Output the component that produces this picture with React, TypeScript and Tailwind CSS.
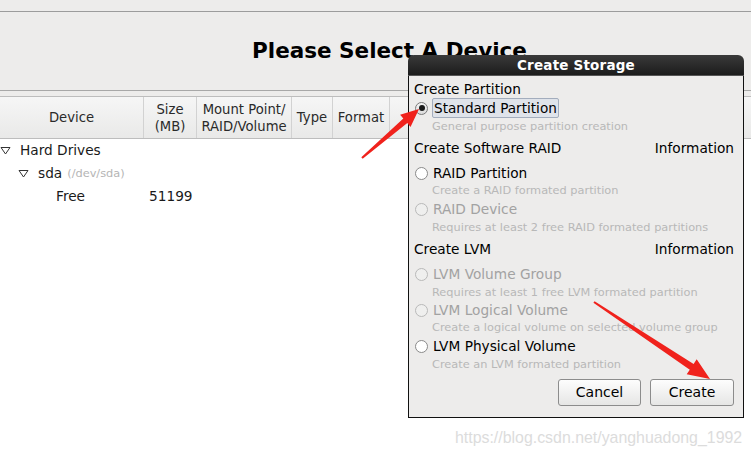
import React from "react";

const font = { fontFamily: '"DejaVu Sans", Verdana, sans-serif' };

function Tri({ className = "" }: { className?: string }) {
  return (
    <svg width="11" height="9" viewBox="0 0 11 9" className={className}>
      <path d="M1 1.5 L10 1.5 L5.5 8 Z" fill="white" stroke="#333" strokeWidth="1" strokeLinejoin="round" />
    </svg>
  );
}

function Radio({ state }: { state: "on" | "off" | "disabled" }) {
  if (state === "on")
    return (
      <span className="w-[13px] h-[13px] rounded-full border border-[#7a7a7a] bg-gradient-to-b from-[#f4f4f4] to-[#dcdcdc] flex items-center justify-center">
        <span className="w-[6px] h-[6px] rounded-full bg-[#1a1a1a]" />
      </span>
    );
  if (state === "off")
    return <span className="w-[13px] h-[13px] rounded-full border border-[#8a8a8a] bg-white" />;
  return <span className="w-[13px] h-[13px] rounded-full border border-[#b9b9b9] bg-[#efefee]" />;
}

function Option({ label, state, mt }: { label: string; state: "on" | "off" | "disabled"; mt: string }) {
  return (
    <div className={`h-[18px] flex items-center ${mt}`}>
      <span className="w-[19px] flex items-center pl-[1px]">
        <Radio state={state} />
      </span>
      <span className={`text-[13.7px] ${state === "disabled" ? "text-[#a2a2a2]" : "text-black"}`}>{label}</span>
    </div>
  );
}

function Desc({ text, mt }: { text: string; mt: string }) {
  return <div className={`h-[18px] flex items-center pl-[18px] text-[11.35px] text-[#b8b8b8] ${mt}`}>{text}</div>;
}

function Section({ title, info, mt }: { title: string; info?: boolean; mt: string }) {
  return (
    <div className={`h-[18px] flex items-center justify-between text-[13.7px] text-black ${mt}`}>
      <span>{title}</span>
      {info && <span>Information</span>}
    </div>
  );
}

export default function App() {
  return (
    <div className="relative w-[751px] h-[454px] bg-white overflow-hidden" style={font}>
      {/* Top area */}
      <div className="bg-[#edeceb]">
        <div className="h-[11px]" />
        <div className="h-px bg-[#9c9c9c]" />
        <div className="h-[78px] flex items-center pl-[252px] pt-[1px]">
          <span className="text-[21.5px] font-bold text-black">Please Select A Device</span>
        </div>
        <div className="h-px bg-[#a8a8a8]" />
        <div className="h-[5px]" />
      </div>
      {/* Header row */}
      <div className="h-[43px] flex border-t border-b border-[#bdbdbd] bg-gradient-to-b from-[#f6f6f6] to-[#e9e9e8] text-[13.2px] text-[#2a2a2a] leading-[17px]">
        <div className="w-[144px] flex items-center justify-center border-r border-[#d2d2d2]">Device</div>
        <div className="w-[53px] flex items-center justify-center text-center border-r border-[#d2d2d2]">
          Size
          <br />
          (MB)
        </div>
        <div className="w-[95px] flex items-center justify-center text-center border-r border-[#d2d2d2]">
          Mount Point/
          <br />
          RAID/Volume
        </div>
        <div className="w-[41px] flex items-center justify-center border-r border-[#d2d2d2]">Type</div>
        <div className="w-[57px] flex items-center justify-center border-r border-[#d2d2d2]">Format</div>
        <div className="flex-1" />
      </div>
      {/* Tree */}
      <div className="text-[13.7px] text-[#1a1a1a]">
        <div className="h-[23px] flex items-center">
          <Tri className="ml-[0px]" />
          <span className="ml-[9px]">Hard Drives</span>
        </div>
        <div className="h-[23px] flex items-center">
          <Tri className="ml-[18px]" />
          <span className="ml-[9px]">sda</span>
          <span className="ml-[5px] text-[11.35px] text-[#b5b5b5]">(/dev/sda)</span>
        </div>
        <div className="h-[23px] flex items-center">
          <span className="ml-[56px] w-[93px]">Free</span>
          <span>51199</span>
        </div>
      </div>

      {/* Dialog window */}
      <div className="absolute left-[408px] top-[55px] w-[336px] h-[363px] flex flex-col">
        <div className="h-[21px] rounded-t-[6px] bg-gradient-to-b from-[#3a3a3a] to-[#1c1c1c] flex items-center justify-center border-b border-[#555]">
          <span className="text-[13.5px] font-bold text-white tracking-[0.2px]">Create Storage</span>
        </div>
        <div className="flex-1 bg-[#edeceb] border-l border-r border-b border-[#111] px-[5px] pr-[9px] pt-[4px]">
          <Section title="Create Partition" mt="mt-0" />
          <div className="h-[18px] flex items-center mt-[1px]">
            <span className="w-[19px] flex items-center pl-[1px]">
              <Radio state="on" />
            </span>
            <span className="text-[13.6px] text-black bg-[#dfe3ea] border border-[#a3adbd] rounded-[2px] h-[20px] flex items-center px-[1px] -ml-[1px]">
              Standard Partition
            </span>
          </div>
          <Desc text="General purpose partition creation" mt="mt-[1px]" />
          <Section title="Create Software RAID" info mt="mt-[3px]" />
          <Option label="RAID Partition" state="off" mt="mt-[7px]" />
          <Desc text="Create a RAID formated partition" mt="mt-0" />
          <Option label="RAID Device" state="disabled" mt="mt-0" />
          <Desc text="Requires at least 2 free RAID formated partitions" mt="mt-[1px]" />
          <Section title="Create LVM" info mt="mt-[3px]" />
          <Option label="LVM Volume Group" state="disabled" mt="mt-[7px]" />
          <Desc text="Requires at least 1 free LVM formated partition" mt="mt-[1px]" />
          <Option label="LVM Logical Volume" state="disabled" mt="-mt-[1px]" />
          <Desc text="Create a logical volume on selected volume group" mt="mt-0" />
          <Option label="LVM Physical Volume" state="off" mt="mt-0" />
          <Desc text="Create an LVM formated partition" mt="mt-[1px]" />
          <div className="flex justify-end gap-[9px] mt-[5px]">
            <button className="w-[83px] h-[27px] rounded-[3px] border border-[#8c8c8c] bg-gradient-to-b from-[#fdfdfd] to-[#e6e6e5] text-[14px] text-black">
              Cancel
            </button>
            <button className="w-[84px] h-[27px] rounded-[3px] border border-[#8c8c8c] bg-gradient-to-b from-[#fdfdfd] to-[#e6e6e5] text-[14px] text-black">
              Create
            </button>
          </div>
        </div>
      </div>

      {/* Red annotation arrows */}
      <svg className="absolute left-0 top-0 pointer-events-none" width="751" height="454" viewBox="0 0 751 454">
        <polygon
          points="362.7,158.8 407.3,123.1 410.5,126.9 419,109 400.1,114.7 403.3,118.5 361.3,157.2"
          fill="#f0221c"
        />
        <polygon
          points="593.4,302.8 689.8,369.7 686.7,374.3 710,379 696.7,359.3 693.6,363.9 594.6,301.2"
          fill="#f0221c"
        />
      </svg>

      {/* Watermark */}
      <div
        className="absolute left-[455px] top-[426px] text-[15.9px] text-[#dcdcdc]"
        style={{ fontFamily: '"Liberation Sans", Arial, sans-serif' }}
      >
        https://blog.csdn.net/yanghuadong_1992
      </div>
    </div>
  );
}
